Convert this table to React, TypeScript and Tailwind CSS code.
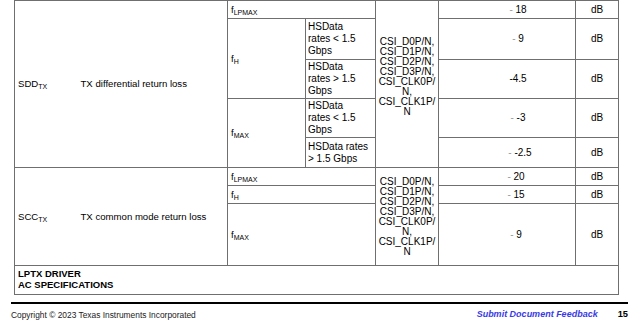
import React from "react";

const FONT = { fontFamily: '"Liberation Sans", Arial, sans-serif' };

// light grey leading dash, as the datasheet renders it
function Dash() {
  return <span className="text-[#9a9a9a]">-</span>;
}

function F({ sub }: { sub: string }) {
  return (
    <span>
      f<sub className="text-[7px] align-baseline relative top-[2px]">{sub}</sub>
    </span>
  );
}

const cell = "border border-[#6f6f6f] px-[2px] align-middle";
const pins = ["CSI_D0P/N,", "CSI_D1P/N,", "CSI_D2P/N,", "CSI_D3P/N,", "CSI_CLK0P/", "N,", "CSI_CLK1P/", "N"];

export default function App() {
  return (
    <div className="relative w-[640px] h-[333px] bg-white text-black overflow-hidden" style={FONT}>
      <table className="ml-[14px] w-[604px] table-fixed border-collapse text-[10px] leading-[12px]">
        <colgroup>
          <col className="w-[63px]" />
          <col className="w-[150px]" />
          <col className="w-[78px]" />
          <col className="w-[70px]" />
          <col className="w-[63px]" />
          <col className="w-[137px]" />
          <col className="w-[43px]" />
        </colgroup>
        <tbody>
          {/* SDD block */}
          <tr className="h-[18px]">
            <td rowSpan={5} className={`${cell} border-r-0 pl-[3px] text-[9.6px]`}>
              SDD<sub className="text-[7px] align-baseline relative top-[2px]">TX</sub>
            </td>
            <td rowSpan={5} className={`${cell} border-l-0 pl-[3px] text-[9.6px]`}>
              TX differential return loss
            </td>
            <td colSpan={2} className={`${cell} pl-[3px] text-[9.6px]`}>
              <F sub="LPMAX" />
            </td>
            <td rowSpan={5} className={`${cell} align-top pt-[36px] text-center leading-[10px]`}>
              {pins.map((p, i) => (
                <div key={i}>{p}</div>
              ))}
            </td>
            <td className={`${cell} text-center pl-6`}>
              <Dash /> 18
            </td>
            <td className={`${cell} text-center`}>dB</td>
          </tr>
          <tr className="h-[41px]">
            <td rowSpan={2} className={`${cell} pl-[3px] text-[9.6px]`}>
              <F sub="H" />
            </td>
            <td className={cell}>
              HSData
              <br />
              rates &lt; 1.5
              <br />
              Gbps
            </td>
            <td className={`${cell} text-center pl-6`}>
              <Dash /> 9
            </td>
            <td className={`${cell} text-center`}>dB</td>
          </tr>
          <tr className="h-[39px]">
            <td className={cell}>
              HSData
              <br />
              rates &gt; 1.5
              <br />
              Gbps
            </td>
            <td className={`${cell} text-center pl-6`}>-4.5</td>
            <td className={`${cell} text-center`}>dB</td>
          </tr>
          <tr className="h-[39px]">
            <td rowSpan={2} className={`${cell} pl-[3px] text-[9.6px]`}>
              <F sub="MAX" />
            </td>
            <td className={cell}>
              HSData
              <br />
              rates &lt; 1.5
              <br />
              Gbps
            </td>
            <td className={`${cell} text-center pl-6`}>
              <Dash /> -3
            </td>
            <td className={`${cell} text-center`}>dB</td>
          </tr>
          <tr className="h-[30px]">
            <td className={cell}>
              HSData rates
              <br />
              &gt; 1.5 Gbps
            </td>
            <td className={`${cell} text-center pl-7`}>
              <Dash /> -2.5
            </td>
            <td className={`${cell} text-center`}>dB</td>
          </tr>

          {/* SCC block */}
          <tr className="h-[18px]">
            <td rowSpan={3} className={`${cell} border-r-0 pl-[3px] text-[9.6px]`}>
              SCC<sub className="text-[7px] align-baseline relative top-[2px]">TX</sub>
            </td>
            <td rowSpan={3} className={`${cell} border-l-0 pl-[3px] text-[9.6px]`}>
              TX common mode return loss
            </td>
            <td colSpan={2} className={`${cell} pl-[3px] text-[9.6px]`}>
              <F sub="LPMAX" />
            </td>
            <td rowSpan={3} className={`${cell} text-center leading-[10px]`}>
              {pins.map((p, i) => (
                <div key={i}>{p}</div>
              ))}
            </td>
            <td className={`${cell} text-center pl-5`}>
              <Dash /> 20
            </td>
            <td className={`${cell} text-center`}>dB</td>
          </tr>
          <tr className="h-[18px]">
            <td colSpan={2} className={`${cell} pl-[3px] text-[9.6px]`}>
              <F sub="H" />
            </td>
            <td className={`${cell} text-center pl-5`}>
              <Dash /> 15
            </td>
            <td className={`${cell} text-center`}>dB</td>
          </tr>
          <tr className="h-[62px]">
            <td colSpan={2} className={`${cell} pl-[3px] text-[9.6px]`}>
              <F sub="MAX" />
            </td>
            <td className={`${cell} text-center pl-5`}>
              <Dash /> 9
            </td>
            <td className={`${cell} text-center`}>dB</td>
          </tr>

          <tr className="h-[29px]">
            <td colSpan={7} className={`${cell} pl-[3px] font-bold text-[9.5px] leading-[10.7px]`}>
              LPTX DRIVER
              <br />
              AC SPECIFICATIONS
            </td>
          </tr>
        </tbody>
      </table>

      <footer className="ml-[11px] mt-[7px] w-[617px]">
        <div className="h-[2px] bg-black" />
        <div className="flex items-center justify-between pt-[4px]">
          <span className="text-[8.4px] text-[#222]">Copyright © 2023 Texas Instruments Incorporated</span>
          <div className="flex items-center gap-[20px]">
            <span className="italic font-bold text-[9px] text-[#3a3ae6]">Submit Document Feedback</span>
            <span className="font-bold text-[9.3px]">15</span>
          </div>
        </div>
      </footer>
    </div>
  );
}
